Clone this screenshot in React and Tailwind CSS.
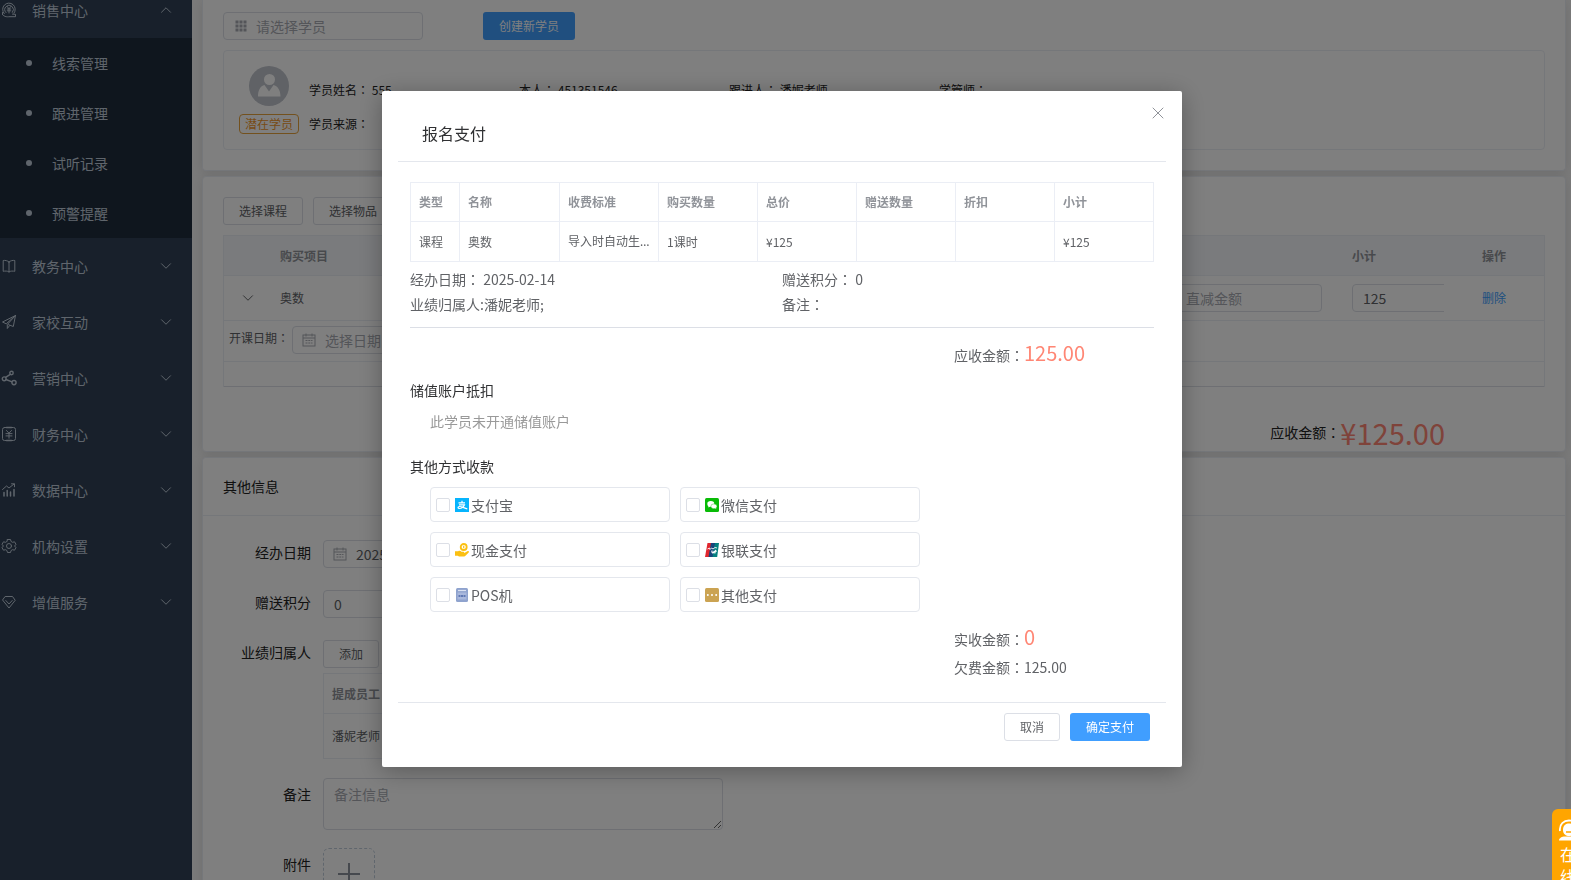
import { useState } from 'react'
import { ChevronDown, ChevronUp, X } from 'lucide-react'

const inputClass =
  'block h-7 rounded border border-[#dcdfe6] bg-white text-sm text-[#606266] outline-none placeholder:text-[#a8abb2]'
const buttonClass =
  'h-7 rounded-[3px] border border-[#dcdfe6] bg-white px-[15px] text-xs leading-none text-[#606266]'

// Full-width colon, centred in its cell
const Colon = () => <span className="font-['Noto_Sans_CJK_TC',sans-serif]">：</span>

// ---------- Icons ----------

const MenuIcon = ({ children }) => (
  <svg
    viewBox="0 0 16 16"
    className="h-4 w-4 shrink-0"
    fill="none"
    stroke="currentColor"
    strokeWidth="1"
    strokeLinecap="round"
    strokeLinejoin="round"
  >
    {children}
  </svg>
)

const SalesIcon = () => (
  <MenuIcon>
    <path d="M3.2 11.6A6.3 6.3 0 1 1 13 11.2" />
    <path d="M5 10.6A4.3 4.3 0 1 1 11.4 10.4" />
    <path d="M6.3 4.6 8 6.8l1.7-2.2M8 6.8V11M6.2 7h3.6M6.2 8.8h3.6" />
    <path d="M1.5 12.5c2 2.6 5 2.4 6.5 2.2h6.5v-2.4l-3-.2" />
    <path d="M1.5 10.5v2.2" />
  </MenuIcon>
)

const BookIcon = () => (
  <MenuIcon>
    <path d="M8 4C6.5 2.5 4 2.2 2.2 2.5v10.8C4 13 6.5 12.8 8 14c1.5-1.2 4-1 5.800-.7V2.5C12 2.2 9.5 2.5 8 4zM8 4v10" />
  </MenuIcon>
)

const PlaneIcon = () => (
  <MenuIcon>
    <path d="M14.5 1.5 1.5 8l3.7 1.8L14.5 1.5zM14.5 1.5 12.3 12.5 7.5 10.7M14.5 1.5 6.3 10.5v4l2.2-2.8" />
  </MenuIcon>
)

const ShareIcon = () => (
  <MenuIcon>
    <g strokeWidth="1.4">
      <circle cx="3.2" cy="8.8" r="1.9" />
      <circle cx="10.5" cy="3" r="1.7" />
      <circle cx="13" cy="12.6" r="2.1" />
      <path d="M4.6 7.4 9.3 4.3M5 9.5l6 2.3" />
    </g>
  </MenuIcon>
)

const FinanceIcon = () => (
  <MenuIcon>
    <rect x="1.5" y="1.5" width="13" height="13" rx="2" />
    <path d="M5.5 1.5h5M5.5 14.5h5" strokeWidth="1.6" />
    <path d="M5.5 4.5 8 7.2l2.5-2.7M8 7.2v5M5 7.6h6M5 9.9h6" />
  </MenuIcon>
)

const ChartIcon = () => (
  <MenuIcon>
    <path d="M1.5 7.5 5.5 4l2.5 2 5-4M10.5 1.8h3v3" />
    <path d="M3 10.5V14M6.2 8.5V14M9.5 10v4M13 7.5V14" strokeWidth="1.5" />
  </MenuIcon>
)

const GearIcon = () => (
  <MenuIcon>
    <circle cx="8" cy="8" r="2.5" />
    <path d="M6.5 1.5h3l.6 2 1.4.8 2-.5 1.5 2.5-1.4 1.7 1.4 1.7-1.5 2.5-2-.5-1.4.8-.6 2h-3l-.6-2-1.4-.8-2 .5L1 9.700 2.400 8 1 6.300l1.500-2.500 2 .5 1.400-.8z" />
  </MenuIcon>
)

const GemIcon = () => (
  <MenuIcon>
    <path d="M4.5 2.5h7l2.7 3.8L8 14 1.8 6.3z" />
    <path d="M4.8 6.5 8 10l3.2-3.5" />
  </MenuIcon>
)

const CalendarIcon = () => (
  <svg viewBox="0 0 14 14" className="h-3.5 w-3.5" fill="none" stroke="#a8abb2">
    <rect x="1" y="2" width="12" height="11" />
    <path d="M1 5h12M4 .5v3M10 .5v3" />
    <path d="M3.5 7.5h7M3.5 10h7" strokeDasharray="2 .8" />
  </svg>
)

const GridIcon = () => (
  <svg viewBox="0 0 12 12" className="h-3 w-3" fill="#a8abb2">
    {[0.5, 4.5, 8.5].map(y =>
      [0.5, 4.5, 8.5].map(x => <rect key={`${x}-${y}`} x={x} y={y} width="3" height="3" />)
    )}
  </svg>
)

const AlipayIcon = () => (
  <svg viewBox="0 0 14 14" className="h-3.5 w-3.5">
    <rect width="14" height="14" fill="#06b4fd" />
    <g fill="none" stroke="#fff" strokeWidth="1.2">
      <path d="M3.5 4.8h6.5M7 2.8v2M4 6.800h5.500C8.500 9 6.500 10.500 4.500 10.500c-2 0-2-2 0-2 2.500 0 4.500 1.500 7.800 2.300" />
    </g>
  </svg>
)

const WechatIcon = () => (
  <svg viewBox="0 0 14 14" className="h-3.5 w-3.5">
    <rect width="14" height="14" rx="1.5" fill="#09bb07" />
    <ellipse cx="5.8" cy="5.9" rx="3.5" ry="2.8" fill="#fff" />
    <path d="M3.5 7.5 3.3 9.5l2-1z" fill="#fff" />
    <ellipse cx="8.9" cy="8.3" rx="3" ry="2.4" fill="#fff" stroke="#09bb07" strokeWidth=".4" />
    <path d="m10 10 1.2 1-.2-2z" fill="#fff" />
  </svg>
)

const CashIcon = () => (
  <svg viewBox="0 0 14 14" className="h-3.5 w-3.5">
    <circle cx="8.7" cy="4" r="3" fill="none" stroke="#fbc012" strokeWidth="1.8" />
    <path d="M8.7 2.8v2.4" stroke="#fbc012" strokeWidth="1.2" />
    <path d="M0 8.3h3.2c1.2-.8 2.4-.5 3.3.4h2c1 0 1 1.4 0 1.4H6.7h2.6L12.8 8c1-.3 1.6.7.9 1.4l-3.5 3.5c-.6.5-1.2.6-2 .6H4l-1.3-.8H0z" fill="#fbc012" />
  </svg>
)

const UnionPayIcon = () => (
  <svg viewBox="0 0 14 14" className="h-3.5 w-3.5">
    <path d="M2.5 0H7L4.5 14H0z" fill="#e0262f" />
    <path d="M6 0h4.5L8 14H3.5z" fill="#18457c" />
    <path d="M10 0h4l-1.8 14H7.5z" fill="#04807f" />
    <path d="M2.5 6 4.5 5l.5 1.5L6.5 5 8 6l2-1.5 2 .5" fill="none" stroke="#fff" strokeWidth=".9" />
    <path d="M7 7.5c-.5 3 1.8 3 2.2.3M9.8 10.5l.6-3 1.2 1" fill="none" stroke="#fff" strokeWidth="1.2" />
  </svg>
)

const PosIcon = () => (
  <svg viewBox="0 0 14 14" className="h-3.5 w-3.5">
    <rect x="1" width="12" height="14" rx="1.5" fill="#8fa3ce" />
    <path d="M3 2.5h8" stroke="#dbe2f2" strokeWidth="1.2" />
    <rect x="2.5" y="4.5" width="9" height="7" fill="#a9b8dc" />
    <path d="M3.5 8h7" stroke="#6079b4" strokeWidth="2" strokeDasharray="2 .5" />
  </svg>
)

const MoreIcon = () => (
  <svg viewBox="0 0 14 14" className="h-3.5 w-3.5">
    <rect width="14" height="14" rx="1.5" fill="#cba352" />
    <g fill="#fff">
      <circle cx="2.8" cy="7" r="1" />
      <circle cx="7" cy="7" r="1" />
      <circle cx="11.2" cy="7" r="1" />
    </g>
  </svg>
)

// ---------- Sidebar ----------

const salesLinks = ['线索管理', '跟进管理', '试听记录', '预警提醒']

const menuItems = [
  { name: '教务中心', Icon: BookIcon },
  { name: '家校互动', Icon: PlaneIcon },
  { name: '营销中心', Icon: ShareIcon },
  { name: '财务中心', Icon: FinanceIcon },
  { name: '数据中心', Icon: ChartIcon },
  { name: '机构设置', Icon: GearIcon },
  { name: '增值服务', Icon: GemIcon }
]

const Sidebar = () => (
  <nav className="w-48 shrink-0 bg-[#304156] text-sm text-[#bfcbd9]">
    <button type="button" className="flex h-[38px] w-full items-center pr-[17px] pb-[18px] pl-[1px]">
      <SalesIcon />
      <span className="ml-[15px]">销售中心</span>
      <ChevronUp size={18} strokeWidth={1.3} className="ml-auto" />
    </button>
    <ul className="bg-[#1f2d3d]">
      {salesLinks.map(name => (
        <li key={name}>
          <a href="#" className="flex h-[50px] items-center pl-[26px]">
            <span className="mr-5 h-1.5 w-1.5 rounded-full bg-[#bfcbd9]" />
            {name}
          </a>
        </li>
      ))}
    </ul>
    {menuItems.map(({ name, Icon }) => (
      <button key={name} type="button" className="flex h-14 w-full items-center pr-[17px] pl-[1px]">
        <Icon />
        <span className="ml-[15px]">{name}</span>
        <ChevronDown size={18} strokeWidth={1.3} className="ml-auto" />
      </button>
    ))}
  </nav>
)

// ---------- Page ----------

const Card = ({ className, children }) => (
  <section className={`border-[#ebeef5] bg-white shadow-[0_2px_12px_0_rgba(0,0,0,0.1)] ${className}`}>
    {children}
  </section>
)

const StudentCard = () => (
  <Card className="rounded-b border-x border-b px-5 pt-3 pb-5">
    <div className="flex gap-[60px]">
      <div className="relative w-[200px]">
        <span className="absolute top-2 left-3">
          <GridIcon />
        </span>
        <input aria-label="请选择学员" placeholder="请选择学员" className={`${inputClass} w-full pl-8`} />
      </div>
      <button type="button" className="h-7 rounded-[3px] bg-[#409eff] px-4 text-xs leading-none text-white">
        创建新学员
      </button>
    </div>
    <div className="mt-[10px] flex h-[100px] rounded border border-[#ebeef5] pt-[15px] pl-[15px] text-xs text-[#222]">
      <div className="flex w-[60px] flex-col items-center gap-2">
        <svg viewBox="0 0 40 40" className="h-10 w-10">
          <circle cx="20" cy="20" r="20" fill="#c0c4cc" />
          <circle cx="20.5" cy="13.5" r="5.5" fill="#fff" />
          <path d="M9 30.5c0-6.5 2.5-10.5 6.5-11.5l4.5 6.5 4.5-6.5c4 1 7 5 7 11.5z" fill="#fff" />
        </svg>
        <span className="h-5 rounded border border-[#e6a23c] px-[5px] leading-[18px] whitespace-nowrap text-[#f0962c]">
          潜在学员
        </span>
      </div>
      <div className="ml-[10px] grid grid-cols-[repeat(4,210px)] content-start pt-[7px] leading-[34px]">
        <span>学员姓名<Colon /> 555</span>
        <span>本人<Colon /> 451351546</span>
        <span>跟进人<Colon /> 潘妮老师</span>
        <span>学管师<Colon /></span>
        <span>学员来源<Colon /></span>
      </div>
    </div>
  </Card>
)

const OrderCard = () => (
  <Card className="rounded border px-5 pt-5 pb-px">
    <div className="flex gap-[10px]">
      <button type="button" className={buttonClass}>选择课程</button>
      <button type="button" className={buttonClass}>选择物品</button>
    </div>
    <div className="mt-[10px] border-x border-t border-[#ebeef5]">
      <table className="w-full table-fixed border-separate border-spacing-0 text-left text-xs text-[#606266]">
        <colgroup>
          <col className="w-[46px]" />
          <col />
          <col className="w-[182px]" />
          <col className="w-[130px]" />
          <col className="w-[72px]" />
        </colgroup>
        <thead className="bg-[#f5f7fa] text-[#909399]">
          <tr>
            <th className="h-10 border-b border-[#ebeef5]" />
            <th className="border-b border-[#ebeef5] px-[10px]">购买项目</th>
            <th className="border-b border-[#ebeef5]" />
            <th className="border-b border-[#ebeef5] px-[10px]">小计</th>
            <th className="border-b border-[#ebeef5] px-[10px]">操作</th>
          </tr>
        </thead>
        <tbody>
          <tr>
            <td className="h-[45px] border-b border-[#ebeef5]">
              <ChevronDown size={18} strokeWidth={1.3} className="ml-[15px]" />
            </td>
            <td className="border-b border-[#ebeef5] px-[10px]">奥数</td>
            <td className="border-b border-[#ebeef5] pr-5 pl-[10px]">
              <input aria-label="直减金额" placeholder="直减金额" className={`${inputClass} w-full px-[15px]`} />
            </td>
            <td className="border-b border-[#ebeef5] px-[10px]">
              <div className="w-[92px] overflow-hidden">
                <input aria-label="小计" defaultValue="125" className={`${inputClass} w-[110px] px-[10px]`} />
              </div>
            </td>
            <td className="border-b border-[#ebeef5] px-[10px]">
              <a href="#" className="text-[#409eff]">删除</a>
            </td>
          </tr>
          <tr>
            <td colSpan={5} className="h-[41px] border-b border-[#ebeef5] pt-[5px] pl-[5px] align-top">
              <div className="flex">
                <label htmlFor="startDate" className="w-[63px] leading-6">
                  开课日期<Colon />
                </label>
                <div className="relative w-[200px]">
                  <span className="absolute top-[7px] left-[10px]">
                    <CalendarIcon />
                  </span>
                  <input id="startDate" placeholder="选择日期" className={`${inputClass} w-full pl-8`} />
                </div>
              </div>
            </td>
          </tr>
          <tr>
            <td colSpan={5} className="h-[25px] border-b border-[#dcdfe6]" />
          </tr>
        </tbody>
      </table>
    </div>
    <div className="flex items-center justify-end pt-[27px] pr-[100px] text-sm text-[#222]">
      <span>应收金额<Colon /></span>
      <span className="text-[29px] leading-9 text-[#ff8674]">¥125.00</span>
    </div>
  </Card>
)

const FormRow = ({ label, htmlFor, labelClass = 'leading-6', children }) => (
  <div className="flex">
    <label htmlFor={htmlFor} className={`mr-3 w-[108px] shrink-0 text-right ${labelClass}`}>
      {label}
    </label>
    {children}
  </div>
)

const OtherInfoCard = () => (
  <Card className="min-h-[500px] grow rounded-t border-x border-t text-sm text-[#222]">
    <h2 className="border-b border-[#ebeef5] px-5 pt-[18px] pb-[19px] leading-5">其他信息</h2>
    <div className="mt-6 flex flex-col gap-[22px]">
      <FormRow label="经办日期" htmlFor="handleDate">
        <div className="relative w-[200px]">
          <span className="absolute top-[7px] left-[10px]">
            <CalendarIcon />
          </span>
          <input id="handleDate" defaultValue="2025-02-14" className={`${inputClass} w-full pl-8`} />
        </div>
      </FormRow>
      <FormRow label="赠送积分" htmlFor="points">
        <input id="points" defaultValue="0" className={`${inputClass} w-[200px] px-[10px]`} />
      </FormRow>
      <FormRow label="业绩归属人" htmlFor="addStaff">
        <div>
          <button id="addStaff" type="button" className={`block ${buttonClass}`}>添加</button>
          <div className="mt-[5px] w-[400px] border-x border-t border-[#ebeef5]">
            <table className="w-full border-separate border-spacing-0 text-left text-xs text-[#606266]">
              <thead>
                <tr>
                  <th className="h-10 border-b border-[#ebeef5] px-2 text-[#909399]">提成员工</th>
                </tr>
              </thead>
              <tbody>
                <tr>
                  <td className="h-[45px] border-b border-[#ebeef5] px-2">潘妮老师</td>
                </tr>
              </tbody>
            </table>
          </div>
        </div>
      </FormRow>
    </div>
    <div className="mt-[19px] flex flex-col gap-[18px]">
      <FormRow label="备注" htmlFor="remark" labelClass="leading-8">
        <textarea
          id="remark"
          placeholder="备注信息"
          className="h-[52px] w-[400px] rounded border border-[#dcdfe6] bg-white px-[10px] py-[5px] leading-5 outline-none placeholder:text-[#a8abb2]"
        />
      </FormRow>
      <FormRow label="附件" htmlFor="upload" labelClass="leading-8">
        <button
          id="upload"
          type="button"
          aria-label="上传附件"
          className="flex h-[52px] w-[52px] items-center justify-center rounded-md border border-dashed border-[#c0ccda]"
        >
          <svg viewBox="0 0 24 24" className="h-6 w-6" stroke="#8c939d" strokeWidth="2">
            <path d="M12 1v22M1 12h22" />
          </svg>
        </button>
      </FormRow>
    </div>
  </Card>
)

// ---------- Payment dialog ----------

const columns = [
  { title: '类型', value: '课程' },
  { title: '名称', value: '奥数' },
  { title: '收费标准', value: '导入时自动生成', cellClass: "font-['Noto_Sans','Noto_Sans_CJK_SC',sans-serif]" },
  { title: '购买数量', value: '1课时' },
  { title: '总价', value: '¥125' },
  { title: '赠送数量', value: '' },
  { title: '折扣', value: '' },
  { title: '小计', value: '¥125' }
]

const payMethods = [
  { id: 'alipay', name: '支付宝', Icon: AlipayIcon },
  { id: 'wechat', name: '微信支付', Icon: WechatIcon },
  { id: 'cash', name: '现金支付', Icon: CashIcon },
  { id: 'unionpay', name: '银联支付', Icon: UnionPayIcon },
  { id: 'pos', name: 'POS机', Icon: PosIcon },
  { id: 'other', name: '其他支付', Icon: MoreIcon }
]

const PaymentDialog = () => {
  const [selected, setSelected] = useState([])

  const toggle = id =>
    setSelected(prev => (prev.includes(id) ? prev.filter(item => item !== id) : [...prev, id]))

  return (
    <div className="fixed inset-0 z-10 overflow-hidden bg-black/50 pt-[91px] pr-[7px]">
      <div
        role="dialog"
        aria-labelledby="payTitle"
        className="relative mx-auto w-[800px] rounded-[2px] bg-white px-4 pb-[26px] text-sm text-[#606266] shadow-[0_4px_24px_rgba(0,0,0,0.3)]"
      >
        <button type="button" aria-label="关闭" className="absolute top-3 right-[14px] text-[#909399]">
          <X size={20} strokeWidth={1.2} />
        </button>
        <h1 id="payTitle" className="border-b border-[#e4e7ed] px-6 pt-[30px] pb-4 text-base leading-6 text-[#303133]">
          报名支付
        </h1>

        <div className="px-3 pt-5">
          <div className="border-t border-l border-[#ebeef5]">
            <table className="w-full table-fixed border-separate border-spacing-0 text-left text-xs">
              <colgroup>
                <col className="w-[49px]" />
                <col className="w-[100px]" />
                <col span={6} />
              </colgroup>
              <thead>
                <tr>
                  {columns.map(({ title }) => (
                    <th key={title} className="h-[39px] border-r border-b border-[#ebeef5] pl-2 text-[#909399]">
                      {title}
                    </th>
                  ))}
                </tr>
              </thead>
              <tbody>
                <tr>
                  {columns.map(({ title, value, cellClass = '' }) => (
                    <td key={title} className={`h-10 truncate border-r border-b border-[#ebeef5] px-2 ${cellClass}`}>
                      {value}
                    </td>
                  ))}
                </tr>
              </tbody>
            </table>
          </div>

          <div className="grid grid-cols-2 border-b border-[#dcdfe6] pt-[5px] pb-[10px] leading-[25px]">
            <span>经办日期<Colon /> 2025-02-14</span>
            <span>赠送积分<Colon /> 0</span>
            <span>业绩归属人:潘妮老师;</span>
            <span>备注<Colon /></span>
          </div>

          <p className="mt-[10px] ml-auto flex w-[200px] items-baseline leading-[30px]">
            <span>应收金额<Colon /></span>
            <span className="text-xl leading-[30px] text-[#ff8674]">125.00</span>
          </p>

          <h3 className="mt-[10px] leading-5 text-[#303133]">储值账户抵扣</h3>
          <p className="mt-[11px] pl-5 leading-5 text-[#999]">此学员未开通储值账户</p>

          <h3 className="mt-[25px] leading-5 text-[#303133]">其他方式收款</h3>
          <div className="mt-[11px] grid grid-cols-[240px_240px] gap-[10px] pl-5">
            {payMethods.map(({ id, name, Icon }) => (
              <label
                key={id}
                className="flex h-[35px] items-center rounded border border-[#e4e7ed] pl-[5px]"
              >
                <input
                  type="checkbox"
                  checked={selected.includes(id)}
                  onChange={() => toggle(id)}
                  className="mr-[5px] h-3.5 w-3.5 appearance-none rounded-[2px] border border-[#dcdfe6] bg-white checked:border-[#409eff] checked:bg-[#409eff]"
                />
                <Icon />
                <span className="ml-0.5">{name}</span>
              </label>
            ))}
          </div>

          <div className="mt-[11px] ml-auto w-[200px] leading-7">
            <p className="flex items-baseline">
              <span>实收金额<Colon /></span>
              <span className="text-xl leading-7 text-[#ff8674]">0</span>
            </p>
            <p>欠费金额<Colon />125.00</p>
          </div>
        </div>

        <div className="mt-[21px] flex justify-end gap-[10px] border-t border-[#e4e7ed] pt-[10px] pr-4">
          <button type="button" className={buttonClass}>取消</button>
          <button type="button" className="h-7 rounded-[3px] bg-[#409eff] px-4 text-xs leading-none text-white">
            确定支付
          </button>
        </div>
      </div>
    </div>
  )
}

// Online support tab at the right edge of the window
const SupportWidget = () => (
  <button
    type="button"
    className="fixed right-0 bottom-0 z-20 flex h-[71px] w-[19px] flex-col overflow-hidden rounded-tl-md bg-[#ffa500] pt-[10px] pl-[6px] text-left text-base leading-[22px] text-white"
  >
    <svg viewBox="0 0 22 22" className="mb-0.5 h-[22px] w-[22px] shrink-0">
      <path d="M2 12C1 5 6 1.5 11 1.5S21 5 20 12" fill="none" stroke="#fff" strokeWidth="1.8" />
      <path d="M5 11C5 6 8 4.5 11 4.5S17 6 17 11s-3 6-6 6-6-2-6-6z" fill="#fff" />
      <path d="M1 21.5c0-2.5 3-4 6-4h8c3 0 6 1.5 6 4z" fill="#fff" />
      <path d="M8 13h6" stroke="#ffa500" strokeWidth="1.5" />
    </svg>
    <span className="ml-0.5 w-4 shrink-0">在线</span>
  </button>
)

const App = () => (
  <div className="flex h-screen overflow-hidden bg-white font-['Noto_Sans_CJK_SC',sans-serif]">
    <Sidebar />
    <main className="flex min-w-0 grow flex-col gap-[5px] overflow-hidden bg-[#f5f5f5] pr-[5px] pl-[10px]">
      <StudentCard />
      <OrderCard />
      <OtherInfoCard />
    </main>
    <PaymentDialog />
    <SupportWidget />
  </div>
)

export default App
